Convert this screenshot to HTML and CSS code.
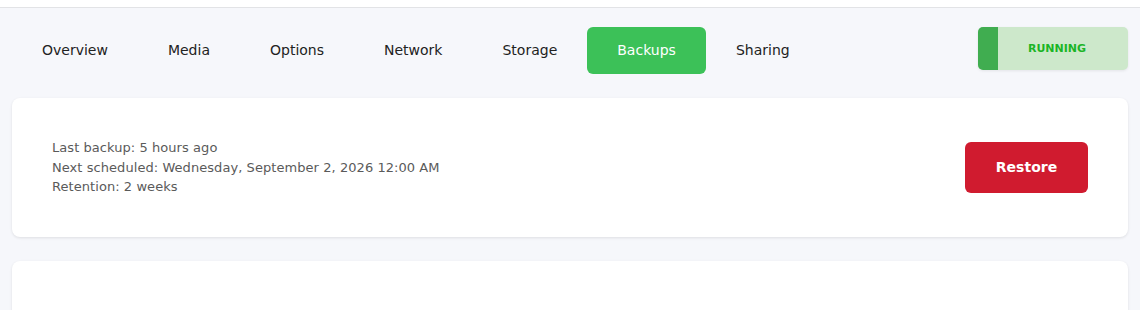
FILE: index.html
```html
<!DOCTYPE html>
<html>
  <head>
    <link rel="stylesheet" href="styles.css">
  </head>
  <body>
    <div class="topbar"></div>
    <div class="main">
      <div class="nav-row">
        <div class="tabs">
          <div class="tab">Overview</div>
          <div class="tab">Media</div>
          <div class="tab">Options</div>
          <div class="tab">Network</div>
          <div class="tab">Storage</div>
          <div class="tab active">Backups</div>
          <div class="tab">Sharing</div>
        </div>
        <div class="status">
          <div class="status-strip"></div>
          <div class="status-text">RUNNING</div>
        </div>
      </div>
      <div class="card backup-card">
        <div class="backup-info">
          <div>Last backup: 5 hours ago</div>
          <div>Next scheduled: Wednesday, September 2, 2026 12:00 AM</div>
          <div>Retention: 2 weeks</div>
        </div>
        <div class="restore-button">Restore</div>
      </div>
      <div class="card empty-card"></div>
    </div>
  </body>
</html>
```

FILE: styles.css
```css
body {
    margin: 0;
    font-family: 'DejaVu Sans', sans-serif;
    background-color: #f6f7fb;
    color: #222;
    overflow: hidden;
}
.topbar {
    height: 7px;
    background-color: #fff;
    border-bottom: 1px solid #e2e3e6;
}
.main {
    padding: 19px 12px 0 12px;
}
.nav-row {
    display: flex;
    justify-content: space-between;
    align-items: flex-start;
}
.tabs {
    display: flex;
}
.tab {
    height: 46px;
    padding: 0 30px 1px 30px;
    display: flex;
    align-items: center;
    font-size: 14px;
    color: #222;
    border-radius: 6px;
}
.tab.active {
    background-color: #3cc158;
    color: #fff;
}
.status {
    width: 150px;
    height: 43px;
    display: flex;
    background-color: #cde8cb;
    border-radius: 5px;
    overflow: hidden;
    box-shadow: 0 1px 3px rgba(0, 0, 0, 0.08);
}
.status-strip {
    width: 20px;
    background-color: #40ad50;
}
.status-text {
    flex: 1;
    display: flex;
    align-items: center;
    justify-content: center;
    padding: 0 12px 1px 0;
    font-size: 11px;
    font-weight: bold;
    color: #1bb526;
}
.card {
    background-color: #fff;
    border-radius: 8px;
    box-shadow: 0 1px 3px rgba(0, 0, 0, 0.1);
    margin-top: 24px;
}
.backup-card {
    display: flex;
    justify-content: space-between;
    align-items: center;
    padding: 40px;
}
.backup-info {
    font-size: 13px;
    line-height: 19.5px;
    letter-spacing: 0.06px;
    color: #5a5a5a;
}
.restore-button {
    width: 123px;
    height: 51px;
    display: flex;
    align-items: center;
    justify-content: center;
    background-color: #d01b2f;
    color: #fff;
    font-size: 14px;
    font-weight: bold;
    border-radius: 6px;
}
.empty-card {
    height: 100px;
}
```
